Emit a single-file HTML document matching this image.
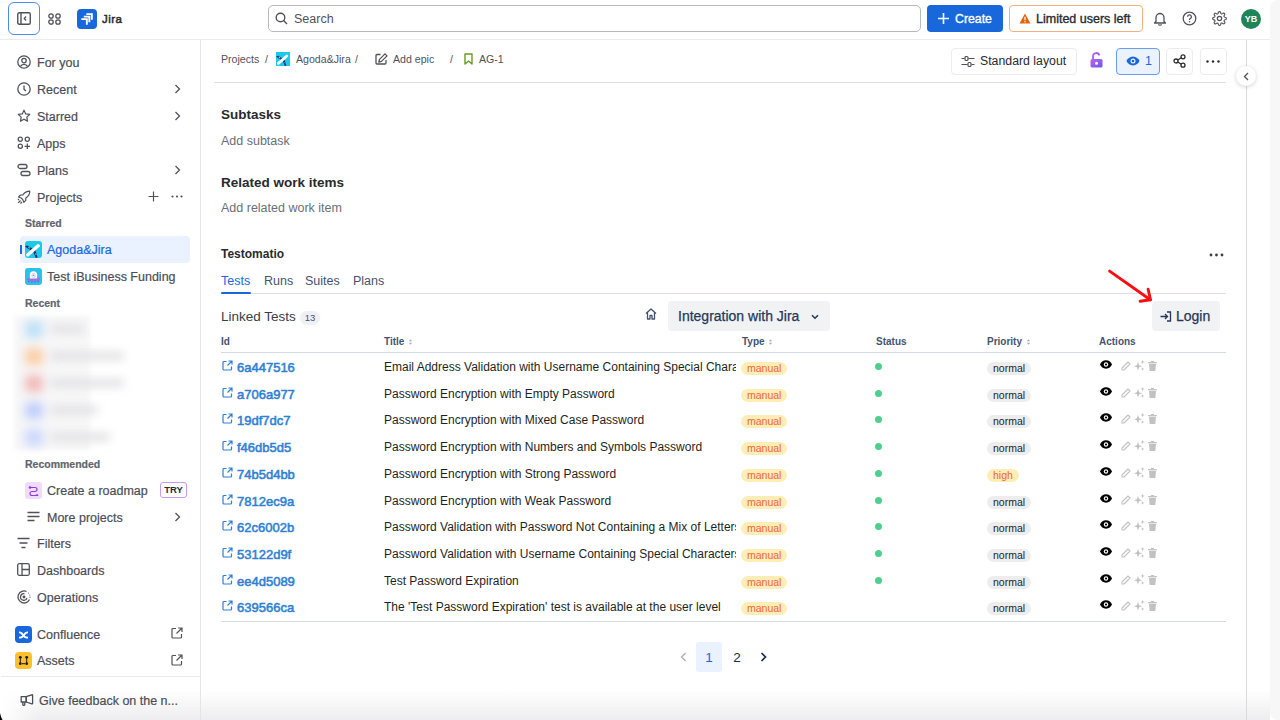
<!DOCTYPE html>
<html><head><meta charset="utf-8">
<style>
*{box-sizing:border-box;margin:0;padding:0}
html,body{width:1280px;height:720px;overflow:hidden;background:#fff;font-family:"Liberation Sans",sans-serif;color:#292a2e}
.a{position:absolute;white-space:nowrap}
svg{display:block}
.side{color:#4b4e56;font-size:12.5px}
.st{margin-top:1px;-webkit-text-stroke:0.2px currentColor}
.ico{position:absolute}
.md{-webkit-text-stroke:0.35px currentColor}
.bc{font-size:10.6px;color:#505258;padding-top:1px}
.btn{border:1px solid #ebecf0;border-radius:4px;background:#fff}
.tab{font-size:12.5px;color:#44546f}
.th{font-size:10px;font-weight:bold;color:#44546f}
.srt{font-size:8px;color:#a5adba;font-weight:normal}
.rid{font-size:13px;color:#2f7fd3;-webkit-text-stroke:0.55px currentColor}
.ttl{font-size:12px;color:#1e1f21;width:352px;overflow:hidden}
.bdg{height:13px;border-radius:7px;font-size:10.5px;line-height:13px;padding:0 6px}
.man{background:#fdeeb5;color:#f0643a}
.hi{background:#fdeeb5;color:#f0643a}
.nrm{background:#ededed;color:#1e1e1e}
</style></head><body>

<!-- bottom shade -->
<div class="a" style="left:0;top:690px;width:1270px;height:30px;background:linear-gradient(to bottom,rgba(234,234,236,0),rgba(234,234,236,.85));-webkit-mask-image:linear-gradient(to right,transparent 0,#000 40px)"></div>
<!-- TOP BAR -->
<div class="a" style="left:0;top:0;width:1270px;height:40px;background:#fff;border-bottom:1px solid #ebebed"></div>
<div class="a" style="left:7.5px;top:2px;width:32.5px;height:33px;border:1.8px solid #4a8cf0;border-radius:6px"></div>
<svg class="ico" style="left:17px;top:12px" width="14" height="13" viewBox="0 0 14 13"><rect x="0.75" y="0.75" width="12.5" height="11.5" rx="1.5" fill="none" stroke="#505258" stroke-width="1.4"/><line x1="4" y1="1" x2="4" y2="12" stroke="#505258" stroke-width="1.4"/><path d="M9 4.5 L7.3 6.5 L9 8.5" fill="none" stroke="#505258" stroke-width="1.3"/></svg>
<svg class="ico" style="left:48px;top:13px" width="13" height="12" viewBox="0 0 13 12"><g fill="none" stroke="#505258" stroke-width="1.3"><circle cx="3" cy="3" r="2.2"/><circle cx="10" cy="3" r="2.2"/><circle cx="3" cy="9" r="2.2"/><circle cx="10" cy="9" r="2.2"/></g></svg>
<div class="a" style="left:77px;top:9px;width:20px;height:20px;background:#1868db;border-radius:4px"></div>
<svg class="ico" style="left:80px;top:12px" width="14" height="14" viewBox="0 0 14 14"><g fill="#fff"><path d="M6.3 1.2h6.5v6.5h-1.9V3.1H6.3z"/><path d="M3.8 3.7h6.5v6.5H8.4V5.6H3.8z"/><path d="M1.3 6.2h6.5v6.5H5.9V8.1H1.3z"/></g></svg>
<div class="a" style="left:102px;top:13px;font-size:11.5px;letter-spacing:.45px;color:#292a2e;-webkit-text-stroke:.5px #292a2e">Jira</div>

<!-- search -->
<div class="a" style="left:268px;top:5px;width:653px;height:27px;border:1px solid #b7b9be;border-radius:5px"></div>
<svg class="ico" style="left:275px;top:12px" width="13" height="13" viewBox="0 0 13 13"><circle cx="5.5" cy="5.5" r="4.3" fill="none" stroke="#505258" stroke-width="1.4"/><line x1="8.6" y1="8.6" x2="12" y2="12" stroke="#505258" stroke-width="1.4"/></svg>
<div class="a" style="left:294px;top:12px;font-size:12.5px;color:#505258">Search</div>

<!-- create -->
<div class="a" style="left:927px;top:5px;width:76px;height:27px;background:#1868db;border-radius:4px"></div>
<svg class="ico" style="left:937px;top:12px" width="13" height="13" viewBox="0 0 13 13"><path d="M6.5 1v11M1 6.5h11" stroke="#fff" stroke-width="1.6"/></svg>
<div class="a md" style="left:955px;top:12px;font-size:12.3px;color:#fff">Create</div>

<!-- limited -->
<div class="a" style="left:1009px;top:5px;width:134px;height:27px;border:1px solid #f2b07c;border-radius:4px"></div>
<svg class="ico" style="left:1019px;top:13px" width="12" height="11" viewBox="0 0 12 11"><path d="M6 0.5 L11.5 10.5 H0.5z" fill="#e2650c"/><rect x="5.4" y="3.8" width="1.2" height="3.5" fill="#fff"/><rect x="5.4" y="8.2" width="1.2" height="1.2" fill="#fff"/></svg>
<div class="a md" style="left:1036px;top:12px;font-size:12.5px;color:#292a2e">Limited users left</div>

<!-- bell help settings avatar -->
<svg class="ico" style="left:1153px;top:11px" width="14" height="15" viewBox="0 0 14 15"><path d="M3 10.5 V6.5 a4 4 0 0 1 8 0 V10.5 L12.5 12 H1.5z" fill="none" stroke="#505258" stroke-width="1.3" stroke-linejoin="round"/><path d="M5.5 13.2 a1.6 1.6 0 0 0 3 0" fill="none" stroke="#505258" stroke-width="1.2"/></svg>
<svg class="ico" style="left:1182px;top:11px" width="15" height="15" viewBox="0 0 15 15"><circle cx="7.5" cy="7.5" r="6.3" fill="none" stroke="#505258" stroke-width="1.3"/><path d="M5.6 5.8 a1.9 1.9 0 1 1 2.6 1.8 c-0.6 0.3 -0.7 0.7 -0.7 1.4" fill="none" stroke="#505258" stroke-width="1.3"/><circle cx="7.5" cy="10.8" r="0.8" fill="#505258"/></svg>
<svg class="ico" style="left:1212px;top:11px" width="15" height="15" viewBox="0 0 24 24"><path d="M12 15.5a3.5 3.5 0 1 0 0-7 3.5 3.5 0 0 0 0 7z" fill="none" stroke="#505258" stroke-width="2"/><path d="M19.4 15a1.7 1.7 0 0 0 .3 1.8l.1.1a2 2 0 1 1-2.8 2.8l-.1-.1a1.7 1.7 0 0 0-1.8-.3 1.7 1.7 0 0 0-1 1.5V21a2 2 0 1 1-4 0v-.1a1.7 1.7 0 0 0-1.1-1.5 1.7 1.7 0 0 0-1.8.3l-.1.1a2 2 0 1 1-2.8-2.8l.1-.1a1.7 1.7 0 0 0 .3-1.8 1.7 1.7 0 0 0-1.5-1H3a2 2 0 1 1 0-4h.1a1.7 1.7 0 0 0 1.5-1.1 1.7 1.7 0 0 0-.3-1.8l-.1-.1a2 2 0 1 1 2.8-2.8l.1.1a1.7 1.7 0 0 0 1.8.3H9a1.7 1.7 0 0 0 1-1.5V3a2 2 0 1 1 4 0v.1a1.7 1.7 0 0 0 1 1.5 1.7 1.7 0 0 0 1.8-.3l.1-.1a2 2 0 1 1 2.8 2.8l-.1.1a1.7 1.7 0 0 0-.3 1.8V9a1.7 1.7 0 0 0 1.5 1H21a2 2 0 1 1 0 4h-.1a1.7 1.7 0 0 0-1.5 1z" fill="none" stroke="#505258" stroke-width="1.8"/></svg>
<div class="a" style="left:1241px;top:9px;width:20px;height:20px;border-radius:50%;background:#1f845a;color:#fff;font-size:9px;font-weight:bold;text-align:center;line-height:20px">YB</div>
<div class="a" style="left:1270px;top:0;width:10px;height:720px;background:#f7f7f8;border-radius:8px 0 0 8px"></div>

<!-- SIDEBAR -->
<div class="a" style="left:200px;top:39px;width:1px;height:681px;background:#e4e5e8"></div>

<div class="side">
<!-- For you -->
<svg class="ico" style="left:17px;top:55px" width="14" height="14" viewBox="0 0 14 14"><g fill="none" stroke="#505258" stroke-width="1.3"><circle cx="7" cy="7" r="6.2"/><circle cx="7" cy="5.6" r="2.2"/><path d="M3.3 11.6c.8-1.6 2-2.3 3.7-2.3s2.9.7 3.7 2.3"/></g></svg>
<div class="a st" style="left:37px;top:55px">For you</div>
<!-- Recent -->
<svg class="ico" style="left:17px;top:82px" width="14" height="14" viewBox="0 0 14 14"><g fill="none" stroke="#505258" stroke-width="1.3"><circle cx="7" cy="7" r="6.2"/><path d="M7 3.5V7.3l2 1.8"/></g></svg>
<div class="a st" style="left:37px;top:82px">Recent</div>
<svg class="ico" style="left:174px;top:84px" width="7" height="10" viewBox="0 0 7 10"><path d="M1.5 1l4 4-4 4" fill="none" stroke="#505258" stroke-width="1.3"/></svg>
<!-- Starred -->
<svg class="ico" style="left:17px;top:109px" width="14" height="14" viewBox="0 0 14 14"><path d="M7 1.2l1.75 3.7 4 .5-2.95 2.75.75 4L7 10.2l-3.55 1.95.75-4L1.25 5.4l4-.5z" fill="none" stroke="#505258" stroke-width="1.2" stroke-linejoin="round"/></svg>
<div class="a st" style="left:37px;top:109px">Starred</div>
<svg class="ico" style="left:174px;top:111px" width="7" height="10" viewBox="0 0 7 10"><path d="M1.5 1l4 4-4 4" fill="none" stroke="#505258" stroke-width="1.3"/></svg>
<!-- Apps -->
<svg class="ico" style="left:17px;top:136px" width="14" height="14" viewBox="0 0 14 14"><g fill="none" stroke="#505258" stroke-width="1.3"><circle cx="3.3" cy="3.3" r="2.1"/><circle cx="10.3" cy="3.3" r="2.1"/><circle cx="3.3" cy="10.3" r="2.1"/><path d="M10.3 7.6v5.4M7.6 10.3H13"/></g></svg>
<div class="a st" style="left:37px;top:136px">Apps</div>
<!-- Plans -->
<svg class="ico" style="left:17px;top:163px" width="14" height="14" viewBox="0 0 14 14"><g fill="none" stroke="#505258" stroke-width="1.3"><rect x="1" y="1.5" width="9" height="4" rx="2"/><rect x="4" y="8.5" width="9" height="4" rx="2"/></g></svg>
<div class="a st" style="left:37px;top:163px">Plans</div>
<svg class="ico" style="left:174px;top:165px" width="7" height="10" viewBox="0 0 7 10"><path d="M1.5 1l4 4-4 4" fill="none" stroke="#505258" stroke-width="1.3"/></svg>
<!-- Projects -->
<svg class="ico" style="left:17px;top:190px" width="14" height="14" viewBox="0 0 14 14"><g fill="none" stroke="#505258" stroke-width="1.2" stroke-linejoin="round"><path d="M12.8 1.2c-3 0-5.3 1.3-7 3.8L3.5 5 1.5 7l2.7 1 1.6 1.6 1 2.7 2-2V8c2.5-1.7 4-4 4-6.8z"/><path d="M3.5 10.5l-2.3 2.3M5 12l-1.5 1.5M2 9l-1 1"/></g></svg>
<div class="a st" style="left:37px;top:190px">Projects</div>
<svg class="ico" style="left:148px;top:191px" width="11" height="11" viewBox="0 0 11 11"><path d="M5.5 0.5v10M0.5 5.5h10" stroke="#505258" stroke-width="1.2"/></svg>
<svg class="ico" style="left:171px;top:195px" width="12" height="3" viewBox="0 0 12 3"><g fill="#505258"><circle cx="1.5" cy="1.5" r="1.1"/><circle cx="6" cy="1.5" r="1.1"/><circle cx="10.5" cy="1.5" r="1.1"/></g></svg>
<!-- Starred label -->
<div class="a st" style="left:25px;top:216px;font-size:10.5px;font-weight:bold;color:#62656d">Starred</div>
<!-- Agoda highlighted -->
<div class="a" style="left:20px;top:236px;width:170px;height:27px;background:#e9f2fe;border-radius:4px"></div>
<div class="a" style="left:20px;top:245px;width:2px;height:9px;background:#1868db"></div>
<div class="a" style="left:25px;top:241px;width:17px;height:17px;background:#1ec8e8;border-radius:3px;overflow:hidden">
 <svg width="17" height="17" viewBox="0 0 17 17"><path d="M0 5.5 L2 4.6 L8.8 8.2 L7 10.2z" fill="#1d2f6b"/><path d="M8.2 10.5 L10.2 8.8 L12.6 16.5 L10.8 17z" fill="#1d2f6b"/><rect x="-0.5" y="7.6" width="17" height="3.4" rx="1.7" transform="rotate(-41 8 9.3)" fill="#fff"/><path d="M3 6 L5 6.8 L4.2 7.8z" fill="#fff"/><path d="M10.5 12 L11.5 14 L10.3 13.5z" fill="#fff"/></svg>
</div>
<div class="a st" style="left:47px;top:242px;color:#1868db">Agoda&amp;Jira</div>
<!-- Test iBusiness -->
<div class="a" style="left:25px;top:268px;width:17px;height:17px;background:#28c3e6;border-radius:3px;overflow:hidden">
 <svg width="17" height="17" viewBox="0 0 17 17"><path d="M4 12.5 L3.6 14.2 M13 12.5 L13.4 14.2 M7 13.2 L6.9 14.6 M10 13.2 L10.1 14.6" stroke="#6a4fc8" stroke-width="1.1"/><ellipse cx="8.5" cy="11.2" rx="6.5" ry="2.4" fill="#8f74e3"/><path d="M4.8 10.5 V7.2 a3.7 3.9 0 0 1 7.4 0 V10.5z" fill="#fff"/><rect x="7.1" y="5.2" width="2.8" height="4.4" rx="1.4" fill="#fff" stroke="#c7bdf2" stroke-width=".7"/><circle cx="8.5" cy="7.2" r=".75" fill="#8f74e3"/></svg>
</div>
<div class="a st" style="left:47px;top:269px">Test iBusiness Funding</div>
<!-- Recent label -->
<div class="a st" style="left:25px;top:296px;font-size:10.5px;font-weight:bold;color:#62656d">Recent</div>
<!-- blurred -->
<div class="a" style="left:14px;top:316px;width:76px;height:134px;background:rgba(238,238,240,.45);filter:blur(2px)"></div>
<div class="a" style="left:16px;top:314px;width:110px;height:134px;filter:blur(5px)">
 <div class="a" style="left:9px;top:7px;width:18px;height:17px;background:#bfe1f6;border-radius:3px"></div>
 <div class="a" style="left:34px;top:11px;width:34px;height:8px;background:#e0e0e3;border-radius:3px"></div>
 <div class="a" style="left:9px;top:34px;width:18px;height:17px;background:#fbcfa8;border-radius:3px"></div>
 <div class="a" style="left:34px;top:38px;width:74px;height:8px;background:#e0e0e3;border-radius:3px"></div>
 <div class="a" style="left:9px;top:61px;width:18px;height:17px;background:#f2bcbc;border-radius:3px"></div>
 <div class="a" style="left:34px;top:65px;width:74px;height:8px;background:#e0e0e3;border-radius:3px"></div>
 <div class="a" style="left:9px;top:88px;width:18px;height:17px;background:#c2cffb;border-radius:3px"></div>
 <div class="a" style="left:34px;top:92px;width:48px;height:8px;background:#e0e0e3;border-radius:3px"></div>
 <div class="a" style="left:9px;top:115px;width:18px;height:17px;background:#cdd8fc;border-radius:3px"></div>
 <div class="a" style="left:34px;top:119px;width:60px;height:8px;background:#e0e0e3;border-radius:3px"></div>
</div>
<!-- Recommended -->
<div class="a st" style="left:25px;top:457px;font-size:10.5px;font-weight:bold;color:#62656d">Recommended</div>
<div class="a" style="left:25px;top:482px;width:17px;height:17px;background:#efdcfb;border-radius:3px"></div>
<svg class="ico" style="left:28px;top:485px" width="11" height="11" viewBox="0 0 11 11"><g fill="none" stroke="#8f3ed9" stroke-width="1.2"><path d="M2 2.5h5a2 2 0 0 1 0 4H4a2 2 0 0 0 0 4h5"/></g><circle cx="2" cy="2.5" r="1.3" fill="#8f3ed9"/><circle cx="9" cy="10.5" r="1.3" fill="#8f3ed9"/></svg>
<div class="a st" style="left:47px;top:483px">Create a roadmap</div>
<div class="a" style="left:160px;top:482px;width:27px;height:16px;border:1px solid #c89af0;border-radius:3px;font-size:9.5px;font-weight:bold;color:#292a2e;text-align:center;line-height:14px">TRY</div>
<!-- More projects -->
<svg class="ico" style="left:27px;top:511px" width="13" height="11" viewBox="0 0 13 11"><path d="M0.5 1.5h12M0.5 5.5h12M0.5 9.5h7" stroke="#505258" stroke-width="1.3"/></svg>
<div class="a st" style="left:47px;top:510px">More projects</div>
<svg class="ico" style="left:174px;top:512px" width="7" height="10" viewBox="0 0 7 10"><path d="M1.5 1l4 4-4 4" fill="none" stroke="#505258" stroke-width="1.3"/></svg>
<!-- Filters -->
<svg class="ico" style="left:17px;top:537px" width="13" height="12" viewBox="0 0 13 12"><path d="M0.5 1.5h12M2.5 6h8M4.5 10.5h4" stroke="#505258" stroke-width="1.3"/></svg>
<div class="a st" style="left:37px;top:536px">Filters</div>
<!-- Dashboards -->
<svg class="ico" style="left:17px;top:563px" width="13" height="13" viewBox="0 0 13 13"><g fill="none" stroke="#505258" stroke-width="1.3"><rect x="0.7" y="0.7" width="11.6" height="11.6" rx="1.5"/><path d="M5 0.7v11.6M5 6.5h7.3"/></g></svg>
<div class="a st" style="left:37px;top:563px">Dashboards</div>
<!-- Operations -->
<svg class="ico" style="left:17px;top:590px" width="14" height="14" viewBox="0 0 14 14"><g fill="none" stroke="#505258" stroke-width="1.3"><path d="M12.5 9.5A6 6 0 1 1 9.5 1.5"/><path d="M10 8a3.3 3.3 0 1 1-2.5-4.2"/><circle cx="7" cy="7" r="0.8" fill="#505258"/></g><g fill="#505258"><circle cx="11.5" cy="3" r=".6"/><circle cx="12.8" cy="5" r=".6"/><circle cx="13" cy="7.2" r=".6"/></g></svg>
<div class="a st" style="left:37px;top:590px">Operations</div>
<!-- Confluence -->
<div class="a" style="left:15px;top:626px;width:17px;height:17px;background:#1868db;border-radius:4px"></div>
<svg class="ico" style="left:18px;top:629px" width="11" height="11" viewBox="0 0 11 11"><g fill="#fff"><path d="M1 2.5c2.5 0 3.5 1 4.5 2.5S7.5 7.8 10 7.8v1.8C7 9.6 5.5 8.5 4.5 7S2.8 4.3 1 4.3z"/><path d="M10 2.5C7.5 2.5 6.5 3.5 5.5 5S3.5 7.8 1 7.8v1.8C4 9.6 5.5 8.5 6.5 7S8.2 4.3 10 4.3z"/></g></svg>
<div class="a st" style="left:37px;top:627px">Confluence</div>
<svg class="ico" style="left:171px;top:627px" width="12" height="12" viewBox="0 0 12 12"><g fill="none" stroke="#505258" stroke-width="1.2"><path d="M5 1.5H2a1 1 0 0 0-1 1v7.5a1 1 0 0 0 1 1h7.5a1 1 0 0 0 1-1V7"/><path d="M7 1h4v4M11 1L5.5 6.5"/></g></svg>
<!-- Assets -->
<div class="a" style="left:15px;top:652px;width:17px;height:17px;background:#fbc02d;border-radius:4px"></div>
<svg class="ico" style="left:18px;top:655px" width="11" height="11" viewBox="0 0 11 11"><g fill="#1d1d1d"><circle cx="2.3" cy="2.3" r="1.4"/><circle cx="8.7" cy="2.3" r="1.4"/><circle cx="2.3" cy="8.7" r="1.4"/><circle cx="8.7" cy="8.7" r="1.4"/></g><path d="M2.3 2.3v6.4M8.7 2.3v6.4M4 8.7h3" stroke="#1d1d1d" stroke-width="1"/></svg>
<div class="a st" style="left:37px;top:653px">Assets</div>
<svg class="ico" style="left:171px;top:654px" width="12" height="12" viewBox="0 0 12 12"><g fill="none" stroke="#505258" stroke-width="1.2"><path d="M5 1.5H2a1 1 0 0 0-1 1v7.5a1 1 0 0 0 1 1h7.5a1 1 0 0 0 1-1V7"/><path d="M7 1h4v4M11 1L5.5 6.5"/></g></svg>
<!-- separator -->
<div class="a" style="left:1px;top:676px;width:199px;height:1px;background:#e8e9ec"></div>
<svg class="ico" style="left:20px;top:694px" width="14" height="13" viewBox="0 0 14 13"><g fill="none" stroke="#4b4e56" stroke-width="1.3" stroke-linejoin="round"><path d="M1.2 2.6h5v5.4h-5z"/><path d="M6.2 2.6L11.8 0.8Q12.6 0.6 12.6 1.4V9.2Q12.6 10 11.8 9.8L6.2 8z"/><path d="M2.8 8v2.4a1 1 0 0 0 2 0V8.3"/></g></svg>
<div class="a st" style="left:39px;top:693px">Give feedback on the n...</div>
</div>


<!-- MAIN -->

<div class="mn">
<!-- breadcrumb -->
<div class="a bc" style="left:221px;top:52px">Projects</div>
<div class="a bc" style="left:265px;top:52px">/</div>
<div class="a" style="left:276px;top:52px;width:14px;height:14px;background:#1ec8e8;overflow:hidden">
 <svg width="14" height="14" viewBox="0 0 17 17"><path d="M0 5.5 L2 4.6 L8.8 8.2 L7 10.2z" fill="#1d2f6b"/><path d="M8.2 10.5 L10.2 8.8 L12.6 16.5 L10.8 17z" fill="#1d2f6b"/><rect x="-0.5" y="7.6" width="17" height="3.4" rx="1.7" transform="rotate(-41 8 9.3)" fill="#fff"/><path d="M3 6 L5 6.8 L4.2 7.8z" fill="#fff"/><path d="M10.5 12 L11.5 14 L10.3 13.5z" fill="#fff"/></svg>
</div>
<div class="a bc" style="left:296px;top:52px">Agoda&amp;Jira</div>
<div class="a bc" style="left:355px;top:52px">/</div>
<svg class="ico" style="left:375px;top:53px" width="13" height="12" viewBox="0 0 13 12"><g fill="none" stroke="#505258" stroke-width="1.3" stroke-linejoin="round"><path d="M5.5 1.5H2a1 1 0 0 0-1 1V10a1 1 0 0 0 1 1h8a1 1 0 0 0 1-1V7"/><path d="M10 .9l2 2-5.5 5.5-2.6.6.6-2.6z"/></g></svg>
<div class="a bc" style="left:393px;top:52px">Add epic</div>
<div class="a bc" style="left:450px;top:52px">/</div>
<svg class="ico" style="left:464px;top:53px" width="9" height="12" viewBox="0 0 9 12"><path d="M1 1h7v10L4.5 8 1 11z" fill="none" stroke="#6a9a23" stroke-width="1.4" stroke-linejoin="round"/></svg>
<div class="a bc" style="left:479px;top:52px">AG-1</div>

<!-- right buttons -->
<div class="a btn" style="left:951px;top:48px;width:126px;height:27px"></div>
<svg class="ico" style="left:961px;top:55px" width="14" height="13" viewBox="0 0 14 13"><g fill="none" stroke="#505258" stroke-width="1.2"><path d="M0.5 3.5h3M7.5 3.5h6M0.5 9.5h6M10.5 9.5h3"/><rect x="4" y="1.5" width="3" height="4" rx="1"/><rect x="7" y="7.5" width="3" height="4" rx="1"/></g></svg>
<div class="a" style="left:980px;top:54px;font-size:12.3px;color:#292a2e">Standard layout</div>
<svg class="ico" style="left:1090px;top:52px" width="13" height="16" viewBox="0 0 13 16"><defs><linearGradient id="lg" x1="0" y1="0" x2="1" y2="1"><stop offset="0" stop-color="#bf63f3"/><stop offset="1" stop-color="#6a5ae8"/></linearGradient></defs><path d="M3 7V4.2a3.2 3.2 0 0 1 6.3-.8" fill="none" stroke="url(#lg)" stroke-width="1.8"/><rect x="0.5" y="7" width="12" height="8.5" rx="1.5" fill="url(#lg)"/><circle cx="6.5" cy="11.2" r="1.5" fill="#fff"/></svg>
<div class="a" style="left:1116px;top:48px;width:44px;height:27px;background:#e9f2fe;border:1px solid #669df1;border-radius:4px"></div>
<svg class="ico" style="left:1126px;top:56px" width="14" height="10" viewBox="0 0 14 10"><path d="M7 .5C3.8.5 1.5 2.8.5 5c1 2.2 3.3 4.5 6.5 4.5s5.5-2.3 6.5-4.5C12.5 2.8 10.2.5 7 .5z" fill="#1868db"/><circle cx="7" cy="5" r="2.5" fill="#e9f2fe"/><circle cx="7" cy="5" r="1.3" fill="#1868db"/></svg>
<div class="a" style="left:1145px;top:54px;font-size:12.5px;color:#1868db">1</div>
<div class="a btn" style="left:1166px;top:48px;width:27px;height:27px"></div>
<svg class="ico" style="left:1173px;top:54px" width="13" height="14" viewBox="0 0 13 14"><g fill="none" stroke="#292a2e" stroke-width="1.3"><circle cx="10" cy="2.8" r="2"/><circle cx="3" cy="7" r="2"/><circle cx="10" cy="11.2" r="2"/><path d="M4.8 6l3.5-2.2M4.8 8l3.5 2.2"/></g></svg>
<div class="a btn" style="left:1200px;top:48px;width:27px;height:27px"></div>
<svg class="ico" style="left:1206px;top:60px" width="14" height="3" viewBox="0 0 14 3"><g fill="#292a2e"><circle cx="1.5" cy="1.5" r="1.2"/><circle cx="7" cy="1.5" r="1.2"/><circle cx="12.5" cy="1.5" r="1.2"/></g></svg>

<div class="a" style="left:214px;top:82px;width:1012px;height:1px;background:#dcdfe4"></div>
<!-- right collapse -->
<div class="a" style="left:1246px;top:40px;width:1px;height:680px;background:#d9dadd"></div>
<div class="a" style="left:1236px;top:66px;width:20px;height:20px;border-radius:50%;background:#fff;box-shadow:0 1px 4px rgba(0,0,0,.18)"></div>
<svg class="ico" style="left:1243px;top:72px" width="6" height="9" viewBox="0 0 6 9"><path d="M5 1L1.5 4.5 5 8" fill="none" stroke="#505258" stroke-width="1.3"/></svg>

<!-- sections -->
<div class="a" style="left:221px;top:107px;font-size:13.5px;font-weight:bold;color:#292a2e">Subtasks</div>
<div class="a" style="left:221px;top:134px;font-size:12.5px;color:#6b6e76">Add subtask</div>
<div class="a" style="left:221px;top:175px;font-size:13.5px;font-weight:bold;color:#292a2e">Related work items</div>
<div class="a" style="left:221px;top:201px;font-size:12.5px;color:#6b6e76">Add related work item</div>
<div class="a" style="left:221px;top:247px;font-size:12px;font-weight:bold;color:#292a2e">Testomatio</div>
<svg class="ico" style="left:1209px;top:252.5px" width="15" height="4" viewBox="0 0 15 4"><g fill="#3d3f45"><circle cx="2" cy="2" r="1.4"/><circle cx="7.5" cy="2" r="1.4"/><circle cx="13" cy="2" r="1.4"/></g></svg>

<!-- tabs -->
<div class="a tab" style="left:221px;top:274px;color:#1868db">Tests</div>
<div class="a tab" style="left:264px;top:274px">Runs</div>
<div class="a tab" style="left:305px;top:274px">Suites</div>
<div class="a tab" style="left:353px;top:274px">Plans</div>
<div class="a" style="left:221px;top:293px;width:1005px;height:1px;background:#dcdfe4"></div>
<div class="a" style="left:221px;top:292px;width:30px;height:2px;background:#1868db;border-radius:1px"></div>

<!-- linked tests header -->
<div class="a" style="left:221px;top:309px;font-size:13.5px;color:#3b3d42">Linked Tests</div>
<div class="a" style="left:300px;top:311px;width:20px;height:14px;background:#eef0f3;border-radius:7px;font-size:9.5px;color:#44546f;text-align:center;line-height:14px">13</div>
<svg class="ico" style="left:645px;top:308px" width="12" height="12" viewBox="0 0 12 12"><path d="M1 5.5L6 1l5 4.5M2.5 4.3V11h2.5V7.5h2V11h2.5V4.3" fill="none" stroke="#44546f" stroke-width="1.3" stroke-linejoin="round"/></svg>
<div class="a" style="left:668px;top:301px;width:162px;height:30px;background:#f1f2f4;border-radius:4px"></div>
<div class="a" style="left:678px;top:308px;font-size:14px;color:#253858;-webkit-text-stroke:.25px #253858">Integration with Jira</div>
<svg class="ico" style="left:811px;top:314px" width="8" height="6" viewBox="0 0 8 6"><path d="M1 1.2l3 3 3-3" fill="none" stroke="#253858" stroke-width="1.6"/></svg>
<div class="a" style="left:1152px;top:301px;width:68px;height:30px;background:#f1f2f4;border-radius:4px"></div>
<svg class="ico" style="left:1160px;top:311px" width="12" height="11" viewBox="0 0 12 11"><g fill="none" stroke="#253858" stroke-width="1.3"><path d="M7 1h3.5v9H7"/><path d="M0.5 5.5h7M5 3l2.5 2.5L5 8"/></g></svg>
<div class="a" style="left:1176px;top:308px;font-size:14px;color:#253858;-webkit-text-stroke:.25px #253858">Login</div>

<!-- red arrow -->
<svg class="ico" style="left:1100px;top:262px" width="60" height="45" viewBox="0 0 60 45"><g fill="none" stroke="#fb0d12" stroke-width="2.9" stroke-linecap="round" stroke-linejoin="round"><path d="M9.6 9.1 L50.3 37.8"/><path d="M48.1 27.2 L50.5 37.8 L40.1 39.2"/></g></svg>

<!-- table header -->
<div class="a th" style="left:221px;top:336px">Id</div>
<div class="a th" style="left:384px;top:336px">Title <svg style="display:inline-block;vertical-align:middle;margin-left:1px" width="5" height="8" viewBox="0 0 5 8"><path d="M0.8 3.2 L2.5 1.2 L4.2 3.2z M0.8 4.8 L2.5 6.8 L4.2 4.8z" fill="#a5adba"/></svg></div>
<div class="a th" style="left:742px;top:336px">Type <svg style="display:inline-block;vertical-align:middle;margin-left:1px" width="5" height="8" viewBox="0 0 5 8"><path d="M0.8 3.2 L2.5 1.2 L4.2 3.2z M0.8 4.8 L2.5 6.8 L4.2 4.8z" fill="#a5adba"/></svg></div>
<div class="a th" style="left:876px;top:336px">Status</div>
<div class="a th" style="left:987px;top:336px">Priority <svg style="display:inline-block;vertical-align:middle;margin-left:1px" width="5" height="8" viewBox="0 0 5 8"><path d="M0.8 3.2 L2.5 1.2 L4.2 3.2z M0.8 4.8 L2.5 6.8 L4.2 4.8z" fill="#a5adba"/></svg></div>
<div class="a th" style="left:1099px;top:336px">Actions</div>
<div class="a" style="left:221px;top:352px;width:1005px;height:1px;background:#d5d9e0"></div>
<svg class="ico" style="left:222px;top:360px" width="11" height="11" viewBox="0 0 11 11"><g fill="none" stroke="#2f7fd3" stroke-width="1.2"><path d="M4.5 1.5H2a1 1 0 0 0-1 1v6.5a1 1 0 0 0 1 1h6.5a1 1 0 0 0 1-1V6.5"/><path d="M6.5 1h3.5v3.5M10 1L5.5 5.5"/></g></svg>
<div class="a rid" style="left:237px;top:360px">6a447516</div>
<div class="a ttl" style="left:384px;top:360px">Email Address Validation with Username Containing Special Characters</div>
<div class="a bdg man" style="left:741px;top:362px">manual</div>
<div class="a" style="left:875px;top:363px;width:7px;height:7px;border-radius:50%;background:#4ecf8e"></div>
<div class="a bdg nrm" style="left:987px;top:362px">normal</div>
<svg class="ico" style="left:1100px;top:360px" width="12" height="9" viewBox="0 0 12 9"><path d="M6 .3C3 .3 1 2.3 0 4.5 1 6.7 3 8.7 6 8.7s5-2 6-4.2C11 2.3 9 .3 6 .3z" fill="#000"/><circle cx="6" cy="4.5" r="2.2" fill="#fff"/><circle cx="6" cy="4.5" r="1.1" fill="#000"/></svg>
<svg class="ico" style="left:1121px;top:361px" width="10" height="10" viewBox="0 0 10 10"><path d="M7 1l2 2-6 6H1V7z" fill="none" stroke="#c2c2c2" stroke-width="1.1" stroke-linejoin="round"/></svg>
<svg class="ico" style="left:1134px;top:360px" width="11" height="11" viewBox="0 0 11 11"><g fill="#c2c2c2"><path d="M4 1.8 L5.1 5.2 L8.2 6.2 L5.1 7.2 L4 10.6 L2.9 7.2 L-0.2 6.2 L2.9 5.2z"/><path d="M8.6 0 L9.2 1.4 L10.8 2 L9.2 2.6 L8.6 4.2 L8 2.6 L6.4 2 L8 1.4z"/><path d="M8.6 7.2 L9.1 8.5 L10.4 9 L9.1 9.5 L8.6 10.8 L8.1 9.5 L6.8 9 L8.1 8.5z"/></g></svg>
<svg class="ico" style="left:1148px;top:361px" width="9" height="10" viewBox="0 0 9 10"><g fill="#c2c2c2"><rect x="0" y="1" width="9" height="1.3" rx=".5"/><rect x="3" y="0" width="3" height="1.5"/><path d="M1 2.8h7l-.6 6.6a.7.7 0 0 1-.7.6H2.3a.7.7 0 0 1-.7-.6z"/></g></svg>
<svg class="ico" style="left:222px;top:387px" width="11" height="11" viewBox="0 0 11 11"><g fill="none" stroke="#2f7fd3" stroke-width="1.2"><path d="M4.5 1.5H2a1 1 0 0 0-1 1v6.5a1 1 0 0 0 1 1h6.5a1 1 0 0 0 1-1V6.5"/><path d="M6.5 1h3.5v3.5M10 1L5.5 5.5"/></g></svg>
<div class="a rid" style="left:237px;top:387px">a706a977</div>
<div class="a ttl" style="left:384px;top:387px">Password Encryption with Empty Password</div>
<div class="a bdg man" style="left:741px;top:389px">manual</div>
<div class="a" style="left:875px;top:390px;width:7px;height:7px;border-radius:50%;background:#4ecf8e"></div>
<div class="a bdg nrm" style="left:987px;top:389px">normal</div>
<svg class="ico" style="left:1100px;top:387px" width="12" height="9" viewBox="0 0 12 9"><path d="M6 .3C3 .3 1 2.3 0 4.5 1 6.7 3 8.7 6 8.7s5-2 6-4.2C11 2.3 9 .3 6 .3z" fill="#000"/><circle cx="6" cy="4.5" r="2.2" fill="#fff"/><circle cx="6" cy="4.5" r="1.1" fill="#000"/></svg>
<svg class="ico" style="left:1121px;top:388px" width="10" height="10" viewBox="0 0 10 10"><path d="M7 1l2 2-6 6H1V7z" fill="none" stroke="#c2c2c2" stroke-width="1.1" stroke-linejoin="round"/></svg>
<svg class="ico" style="left:1134px;top:387px" width="11" height="11" viewBox="0 0 11 11"><g fill="#c2c2c2"><path d="M4 1.8 L5.1 5.2 L8.2 6.2 L5.1 7.2 L4 10.6 L2.9 7.2 L-0.2 6.2 L2.9 5.2z"/><path d="M8.6 0 L9.2 1.4 L10.8 2 L9.2 2.6 L8.6 4.2 L8 2.6 L6.4 2 L8 1.4z"/><path d="M8.6 7.2 L9.1 8.5 L10.4 9 L9.1 9.5 L8.6 10.8 L8.1 9.5 L6.8 9 L8.1 8.5z"/></g></svg>
<svg class="ico" style="left:1148px;top:388px" width="9" height="10" viewBox="0 0 9 10"><g fill="#c2c2c2"><rect x="0" y="1" width="9" height="1.3" rx=".5"/><rect x="3" y="0" width="3" height="1.5"/><path d="M1 2.8h7l-.6 6.6a.7.7 0 0 1-.7.6H2.3a.7.7 0 0 1-.7-.6z"/></g></svg>
<svg class="ico" style="left:222px;top:413px" width="11" height="11" viewBox="0 0 11 11"><g fill="none" stroke="#2f7fd3" stroke-width="1.2"><path d="M4.5 1.5H2a1 1 0 0 0-1 1v6.5a1 1 0 0 0 1 1h6.5a1 1 0 0 0 1-1V6.5"/><path d="M6.5 1h3.5v3.5M10 1L5.5 5.5"/></g></svg>
<div class="a rid" style="left:237px;top:413px">19df7dc7</div>
<div class="a ttl" style="left:384px;top:413px">Password Encryption with Mixed Case Password</div>
<div class="a bdg man" style="left:741px;top:415px">manual</div>
<div class="a" style="left:875px;top:416px;width:7px;height:7px;border-radius:50%;background:#4ecf8e"></div>
<div class="a bdg nrm" style="left:987px;top:415px">normal</div>
<svg class="ico" style="left:1100px;top:413px" width="12" height="9" viewBox="0 0 12 9"><path d="M6 .3C3 .3 1 2.3 0 4.5 1 6.7 3 8.7 6 8.7s5-2 6-4.2C11 2.3 9 .3 6 .3z" fill="#000"/><circle cx="6" cy="4.5" r="2.2" fill="#fff"/><circle cx="6" cy="4.5" r="1.1" fill="#000"/></svg>
<svg class="ico" style="left:1121px;top:414px" width="10" height="10" viewBox="0 0 10 10"><path d="M7 1l2 2-6 6H1V7z" fill="none" stroke="#c2c2c2" stroke-width="1.1" stroke-linejoin="round"/></svg>
<svg class="ico" style="left:1134px;top:413px" width="11" height="11" viewBox="0 0 11 11"><g fill="#c2c2c2"><path d="M4 1.8 L5.1 5.2 L8.2 6.2 L5.1 7.2 L4 10.6 L2.9 7.2 L-0.2 6.2 L2.9 5.2z"/><path d="M8.6 0 L9.2 1.4 L10.8 2 L9.2 2.6 L8.6 4.2 L8 2.6 L6.4 2 L8 1.4z"/><path d="M8.6 7.2 L9.1 8.5 L10.4 9 L9.1 9.5 L8.6 10.8 L8.1 9.5 L6.8 9 L8.1 8.5z"/></g></svg>
<svg class="ico" style="left:1148px;top:414px" width="9" height="10" viewBox="0 0 9 10"><g fill="#c2c2c2"><rect x="0" y="1" width="9" height="1.3" rx=".5"/><rect x="3" y="0" width="3" height="1.5"/><path d="M1 2.8h7l-.6 6.6a.7.7 0 0 1-.7.6H2.3a.7.7 0 0 1-.7-.6z"/></g></svg>
<svg class="ico" style="left:222px;top:440px" width="11" height="11" viewBox="0 0 11 11"><g fill="none" stroke="#2f7fd3" stroke-width="1.2"><path d="M4.5 1.5H2a1 1 0 0 0-1 1v6.5a1 1 0 0 0 1 1h6.5a1 1 0 0 0 1-1V6.5"/><path d="M6.5 1h3.5v3.5M10 1L5.5 5.5"/></g></svg>
<div class="a rid" style="left:237px;top:440px">f46db5d5</div>
<div class="a ttl" style="left:384px;top:440px">Password Encryption with Numbers and Symbols Password</div>
<div class="a bdg man" style="left:741px;top:442px">manual</div>
<div class="a" style="left:875px;top:443px;width:7px;height:7px;border-radius:50%;background:#4ecf8e"></div>
<div class="a bdg nrm" style="left:987px;top:442px">normal</div>
<svg class="ico" style="left:1100px;top:440px" width="12" height="9" viewBox="0 0 12 9"><path d="M6 .3C3 .3 1 2.3 0 4.5 1 6.7 3 8.7 6 8.7s5-2 6-4.2C11 2.3 9 .3 6 .3z" fill="#000"/><circle cx="6" cy="4.5" r="2.2" fill="#fff"/><circle cx="6" cy="4.5" r="1.1" fill="#000"/></svg>
<svg class="ico" style="left:1121px;top:441px" width="10" height="10" viewBox="0 0 10 10"><path d="M7 1l2 2-6 6H1V7z" fill="none" stroke="#c2c2c2" stroke-width="1.1" stroke-linejoin="round"/></svg>
<svg class="ico" style="left:1134px;top:440px" width="11" height="11" viewBox="0 0 11 11"><g fill="#c2c2c2"><path d="M4 1.8 L5.1 5.2 L8.2 6.2 L5.1 7.2 L4 10.6 L2.9 7.2 L-0.2 6.2 L2.9 5.2z"/><path d="M8.6 0 L9.2 1.4 L10.8 2 L9.2 2.6 L8.6 4.2 L8 2.6 L6.4 2 L8 1.4z"/><path d="M8.6 7.2 L9.1 8.5 L10.4 9 L9.1 9.5 L8.6 10.8 L8.1 9.5 L6.8 9 L8.1 8.5z"/></g></svg>
<svg class="ico" style="left:1148px;top:441px" width="9" height="10" viewBox="0 0 9 10"><g fill="#c2c2c2"><rect x="0" y="1" width="9" height="1.3" rx=".5"/><rect x="3" y="0" width="3" height="1.5"/><path d="M1 2.8h7l-.6 6.6a.7.7 0 0 1-.7.6H2.3a.7.7 0 0 1-.7-.6z"/></g></svg>
<svg class="ico" style="left:222px;top:467px" width="11" height="11" viewBox="0 0 11 11"><g fill="none" stroke="#2f7fd3" stroke-width="1.2"><path d="M4.5 1.5H2a1 1 0 0 0-1 1v6.5a1 1 0 0 0 1 1h6.5a1 1 0 0 0 1-1V6.5"/><path d="M6.5 1h3.5v3.5M10 1L5.5 5.5"/></g></svg>
<div class="a rid" style="left:237px;top:467px">74b5d4bb</div>
<div class="a ttl" style="left:384px;top:467px">Password Encryption with Strong Password</div>
<div class="a bdg man" style="left:741px;top:469px">manual</div>
<div class="a" style="left:875px;top:470px;width:7px;height:7px;border-radius:50%;background:#4ecf8e"></div>
<div class="a bdg hi" style="left:987px;top:469px">high</div>
<svg class="ico" style="left:1100px;top:467px" width="12" height="9" viewBox="0 0 12 9"><path d="M6 .3C3 .3 1 2.3 0 4.5 1 6.7 3 8.7 6 8.7s5-2 6-4.2C11 2.3 9 .3 6 .3z" fill="#000"/><circle cx="6" cy="4.5" r="2.2" fill="#fff"/><circle cx="6" cy="4.5" r="1.1" fill="#000"/></svg>
<svg class="ico" style="left:1121px;top:468px" width="10" height="10" viewBox="0 0 10 10"><path d="M7 1l2 2-6 6H1V7z" fill="none" stroke="#c2c2c2" stroke-width="1.1" stroke-linejoin="round"/></svg>
<svg class="ico" style="left:1134px;top:467px" width="11" height="11" viewBox="0 0 11 11"><g fill="#c2c2c2"><path d="M4 1.8 L5.1 5.2 L8.2 6.2 L5.1 7.2 L4 10.6 L2.9 7.2 L-0.2 6.2 L2.9 5.2z"/><path d="M8.6 0 L9.2 1.4 L10.8 2 L9.2 2.6 L8.6 4.2 L8 2.6 L6.4 2 L8 1.4z"/><path d="M8.6 7.2 L9.1 8.5 L10.4 9 L9.1 9.5 L8.6 10.8 L8.1 9.5 L6.8 9 L8.1 8.5z"/></g></svg>
<svg class="ico" style="left:1148px;top:468px" width="9" height="10" viewBox="0 0 9 10"><g fill="#c2c2c2"><rect x="0" y="1" width="9" height="1.3" rx=".5"/><rect x="3" y="0" width="3" height="1.5"/><path d="M1 2.8h7l-.6 6.6a.7.7 0 0 1-.7.6H2.3a.7.7 0 0 1-.7-.6z"/></g></svg>
<svg class="ico" style="left:222px;top:494px" width="11" height="11" viewBox="0 0 11 11"><g fill="none" stroke="#2f7fd3" stroke-width="1.2"><path d="M4.5 1.5H2a1 1 0 0 0-1 1v6.5a1 1 0 0 0 1 1h6.5a1 1 0 0 0 1-1V6.5"/><path d="M6.5 1h3.5v3.5M10 1L5.5 5.5"/></g></svg>
<div class="a rid" style="left:237px;top:494px">7812ec9a</div>
<div class="a ttl" style="left:384px;top:494px">Password Encryption with Weak Password</div>
<div class="a bdg man" style="left:741px;top:496px">manual</div>
<div class="a" style="left:875px;top:497px;width:7px;height:7px;border-radius:50%;background:#4ecf8e"></div>
<div class="a bdg nrm" style="left:987px;top:496px">normal</div>
<svg class="ico" style="left:1100px;top:494px" width="12" height="9" viewBox="0 0 12 9"><path d="M6 .3C3 .3 1 2.3 0 4.5 1 6.7 3 8.7 6 8.7s5-2 6-4.2C11 2.3 9 .3 6 .3z" fill="#000"/><circle cx="6" cy="4.5" r="2.2" fill="#fff"/><circle cx="6" cy="4.5" r="1.1" fill="#000"/></svg>
<svg class="ico" style="left:1121px;top:495px" width="10" height="10" viewBox="0 0 10 10"><path d="M7 1l2 2-6 6H1V7z" fill="none" stroke="#c2c2c2" stroke-width="1.1" stroke-linejoin="round"/></svg>
<svg class="ico" style="left:1134px;top:494px" width="11" height="11" viewBox="0 0 11 11"><g fill="#c2c2c2"><path d="M4 1.8 L5.1 5.2 L8.2 6.2 L5.1 7.2 L4 10.6 L2.9 7.2 L-0.2 6.2 L2.9 5.2z"/><path d="M8.6 0 L9.2 1.4 L10.8 2 L9.2 2.6 L8.6 4.2 L8 2.6 L6.4 2 L8 1.4z"/><path d="M8.6 7.2 L9.1 8.5 L10.4 9 L9.1 9.5 L8.6 10.8 L8.1 9.5 L6.8 9 L8.1 8.5z"/></g></svg>
<svg class="ico" style="left:1148px;top:495px" width="9" height="10" viewBox="0 0 9 10"><g fill="#c2c2c2"><rect x="0" y="1" width="9" height="1.3" rx=".5"/><rect x="3" y="0" width="3" height="1.5"/><path d="M1 2.8h7l-.6 6.6a.7.7 0 0 1-.7.6H2.3a.7.7 0 0 1-.7-.6z"/></g></svg>
<svg class="ico" style="left:222px;top:520px" width="11" height="11" viewBox="0 0 11 11"><g fill="none" stroke="#2f7fd3" stroke-width="1.2"><path d="M4.5 1.5H2a1 1 0 0 0-1 1v6.5a1 1 0 0 0 1 1h6.5a1 1 0 0 0 1-1V6.5"/><path d="M6.5 1h3.5v3.5M10 1L5.5 5.5"/></g></svg>
<div class="a rid" style="left:237px;top:520px">62c6002b</div>
<div class="a ttl" style="left:384px;top:520px">Password Validation with Password Not Containing a Mix of Letters</div>
<div class="a bdg man" style="left:741px;top:522px">manual</div>
<div class="a" style="left:875px;top:523px;width:7px;height:7px;border-radius:50%;background:#4ecf8e"></div>
<div class="a bdg nrm" style="left:987px;top:522px">normal</div>
<svg class="ico" style="left:1100px;top:520px" width="12" height="9" viewBox="0 0 12 9"><path d="M6 .3C3 .3 1 2.3 0 4.5 1 6.7 3 8.7 6 8.7s5-2 6-4.2C11 2.3 9 .3 6 .3z" fill="#000"/><circle cx="6" cy="4.5" r="2.2" fill="#fff"/><circle cx="6" cy="4.5" r="1.1" fill="#000"/></svg>
<svg class="ico" style="left:1121px;top:521px" width="10" height="10" viewBox="0 0 10 10"><path d="M7 1l2 2-6 6H1V7z" fill="none" stroke="#c2c2c2" stroke-width="1.1" stroke-linejoin="round"/></svg>
<svg class="ico" style="left:1134px;top:520px" width="11" height="11" viewBox="0 0 11 11"><g fill="#c2c2c2"><path d="M4 1.8 L5.1 5.2 L8.2 6.2 L5.1 7.2 L4 10.6 L2.9 7.2 L-0.2 6.2 L2.9 5.2z"/><path d="M8.6 0 L9.2 1.4 L10.8 2 L9.2 2.6 L8.6 4.2 L8 2.6 L6.4 2 L8 1.4z"/><path d="M8.6 7.2 L9.1 8.5 L10.4 9 L9.1 9.5 L8.6 10.8 L8.1 9.5 L6.8 9 L8.1 8.5z"/></g></svg>
<svg class="ico" style="left:1148px;top:521px" width="9" height="10" viewBox="0 0 9 10"><g fill="#c2c2c2"><rect x="0" y="1" width="9" height="1.3" rx=".5"/><rect x="3" y="0" width="3" height="1.5"/><path d="M1 2.8h7l-.6 6.6a.7.7 0 0 1-.7.6H2.3a.7.7 0 0 1-.7-.6z"/></g></svg>
<svg class="ico" style="left:222px;top:547px" width="11" height="11" viewBox="0 0 11 11"><g fill="none" stroke="#2f7fd3" stroke-width="1.2"><path d="M4.5 1.5H2a1 1 0 0 0-1 1v6.5a1 1 0 0 0 1 1h6.5a1 1 0 0 0 1-1V6.5"/><path d="M6.5 1h3.5v3.5M10 1L5.5 5.5"/></g></svg>
<div class="a rid" style="left:237px;top:547px">53122d9f</div>
<div class="a ttl" style="left:384px;top:547px">Password Validation with Username Containing Special Characters</div>
<div class="a bdg man" style="left:741px;top:549px">manual</div>
<div class="a" style="left:875px;top:550px;width:7px;height:7px;border-radius:50%;background:#4ecf8e"></div>
<div class="a bdg nrm" style="left:987px;top:549px">normal</div>
<svg class="ico" style="left:1100px;top:547px" width="12" height="9" viewBox="0 0 12 9"><path d="M6 .3C3 .3 1 2.3 0 4.5 1 6.7 3 8.7 6 8.7s5-2 6-4.2C11 2.3 9 .3 6 .3z" fill="#000"/><circle cx="6" cy="4.5" r="2.2" fill="#fff"/><circle cx="6" cy="4.5" r="1.1" fill="#000"/></svg>
<svg class="ico" style="left:1121px;top:548px" width="10" height="10" viewBox="0 0 10 10"><path d="M7 1l2 2-6 6H1V7z" fill="none" stroke="#c2c2c2" stroke-width="1.1" stroke-linejoin="round"/></svg>
<svg class="ico" style="left:1134px;top:547px" width="11" height="11" viewBox="0 0 11 11"><g fill="#c2c2c2"><path d="M4 1.8 L5.1 5.2 L8.2 6.2 L5.1 7.2 L4 10.6 L2.9 7.2 L-0.2 6.2 L2.9 5.2z"/><path d="M8.6 0 L9.2 1.4 L10.8 2 L9.2 2.6 L8.6 4.2 L8 2.6 L6.4 2 L8 1.4z"/><path d="M8.6 7.2 L9.1 8.5 L10.4 9 L9.1 9.5 L8.6 10.8 L8.1 9.5 L6.8 9 L8.1 8.5z"/></g></svg>
<svg class="ico" style="left:1148px;top:548px" width="9" height="10" viewBox="0 0 9 10"><g fill="#c2c2c2"><rect x="0" y="1" width="9" height="1.3" rx=".5"/><rect x="3" y="0" width="3" height="1.5"/><path d="M1 2.8h7l-.6 6.6a.7.7 0 0 1-.7.6H2.3a.7.7 0 0 1-.7-.6z"/></g></svg>
<svg class="ico" style="left:222px;top:574px" width="11" height="11" viewBox="0 0 11 11"><g fill="none" stroke="#2f7fd3" stroke-width="1.2"><path d="M4.5 1.5H2a1 1 0 0 0-1 1v6.5a1 1 0 0 0 1 1h6.5a1 1 0 0 0 1-1V6.5"/><path d="M6.5 1h3.5v3.5M10 1L5.5 5.5"/></g></svg>
<div class="a rid" style="left:237px;top:574px">ee4d5089</div>
<div class="a ttl" style="left:384px;top:574px">Test Password Expiration</div>
<div class="a bdg man" style="left:741px;top:576px">manual</div>
<div class="a" style="left:875px;top:577px;width:7px;height:7px;border-radius:50%;background:#4ecf8e"></div>
<div class="a bdg nrm" style="left:987px;top:576px">normal</div>
<svg class="ico" style="left:1100px;top:574px" width="12" height="9" viewBox="0 0 12 9"><path d="M6 .3C3 .3 1 2.3 0 4.5 1 6.7 3 8.7 6 8.7s5-2 6-4.2C11 2.3 9 .3 6 .3z" fill="#000"/><circle cx="6" cy="4.5" r="2.2" fill="#fff"/><circle cx="6" cy="4.5" r="1.1" fill="#000"/></svg>
<svg class="ico" style="left:1121px;top:575px" width="10" height="10" viewBox="0 0 10 10"><path d="M7 1l2 2-6 6H1V7z" fill="none" stroke="#c2c2c2" stroke-width="1.1" stroke-linejoin="round"/></svg>
<svg class="ico" style="left:1134px;top:574px" width="11" height="11" viewBox="0 0 11 11"><g fill="#c2c2c2"><path d="M4 1.8 L5.1 5.2 L8.2 6.2 L5.1 7.2 L4 10.6 L2.9 7.2 L-0.2 6.2 L2.9 5.2z"/><path d="M8.6 0 L9.2 1.4 L10.8 2 L9.2 2.6 L8.6 4.2 L8 2.6 L6.4 2 L8 1.4z"/><path d="M8.6 7.2 L9.1 8.5 L10.4 9 L9.1 9.5 L8.6 10.8 L8.1 9.5 L6.8 9 L8.1 8.5z"/></g></svg>
<svg class="ico" style="left:1148px;top:575px" width="9" height="10" viewBox="0 0 9 10"><g fill="#c2c2c2"><rect x="0" y="1" width="9" height="1.3" rx=".5"/><rect x="3" y="0" width="3" height="1.5"/><path d="M1 2.8h7l-.6 6.6a.7.7 0 0 1-.7.6H2.3a.7.7 0 0 1-.7-.6z"/></g></svg>
<svg class="ico" style="left:222px;top:600px" width="11" height="11" viewBox="0 0 11 11"><g fill="none" stroke="#2f7fd3" stroke-width="1.2"><path d="M4.5 1.5H2a1 1 0 0 0-1 1v6.5a1 1 0 0 0 1 1h6.5a1 1 0 0 0 1-1V6.5"/><path d="M6.5 1h3.5v3.5M10 1L5.5 5.5"/></g></svg>
<div class="a rid" style="left:237px;top:600px">639566ca</div>
<div class="a ttl" style="left:384px;top:600px">The 'Test Password Expiration' test is available at the user level</div>
<div class="a bdg man" style="left:741px;top:602px">manual</div>
<div class="a bdg nrm" style="left:987px;top:602px">normal</div>
<svg class="ico" style="left:1100px;top:600px" width="12" height="9" viewBox="0 0 12 9"><path d="M6 .3C3 .3 1 2.3 0 4.5 1 6.7 3 8.7 6 8.7s5-2 6-4.2C11 2.3 9 .3 6 .3z" fill="#000"/><circle cx="6" cy="4.5" r="2.2" fill="#fff"/><circle cx="6" cy="4.5" r="1.1" fill="#000"/></svg>
<svg class="ico" style="left:1121px;top:601px" width="10" height="10" viewBox="0 0 10 10"><path d="M7 1l2 2-6 6H1V7z" fill="none" stroke="#c2c2c2" stroke-width="1.1" stroke-linejoin="round"/></svg>
<svg class="ico" style="left:1134px;top:600px" width="11" height="11" viewBox="0 0 11 11"><g fill="#c2c2c2"><path d="M4 1.8 L5.1 5.2 L8.2 6.2 L5.1 7.2 L4 10.6 L2.9 7.2 L-0.2 6.2 L2.9 5.2z"/><path d="M8.6 0 L9.2 1.4 L10.8 2 L9.2 2.6 L8.6 4.2 L8 2.6 L6.4 2 L8 1.4z"/><path d="M8.6 7.2 L9.1 8.5 L10.4 9 L9.1 9.5 L8.6 10.8 L8.1 9.5 L6.8 9 L8.1 8.5z"/></g></svg>
<svg class="ico" style="left:1148px;top:601px" width="9" height="10" viewBox="0 0 9 10"><g fill="#c2c2c2"><rect x="0" y="1" width="9" height="1.3" rx=".5"/><rect x="3" y="0" width="3" height="1.5"/><path d="M1 2.8h7l-.6 6.6a.7.7 0 0 1-.7.6H2.3a.7.7 0 0 1-.7-.6z"/></g></svg>

<div class="a" style="left:221px;top:621px;width:1005px;height:1px;background:#d5d9e0"></div>
<!-- pagination -->
<svg class="ico" style="left:680px;top:652px" width="7" height="10" viewBox="0 0 7 10"><path d="M5.5 1l-4 4 4 4" fill="none" stroke="#a5adba" stroke-width="1.3"/></svg>
<div class="a" style="left:696px;top:642px;width:26px;height:30px;background:#e9f2fe;border-radius:3px;color:#1868db;font-size:13.5px;text-align:center;line-height:32px">1</div>
<div class="a" style="left:727px;top:642px;width:20px;height:30px;color:#172b4d;font-size:13.5px;text-align:center;line-height:32px">2</div>
<svg class="ico" style="left:760px;top:652px" width="8" height="10" viewBox="0 0 8 10"><path d="M1.5 1l4 4-4 4" fill="none" stroke="#172b4d" stroke-width="1.7"/></svg>
<!-- bottom shade -->
<svg class="ico" style="left:0;top:710px" width="4" height="10" viewBox="0 0 4 10"><path d="M0 3 Q0.8 7 2.5 10 H0z" fill="#000"/></svg>
</div>


</body></html>
